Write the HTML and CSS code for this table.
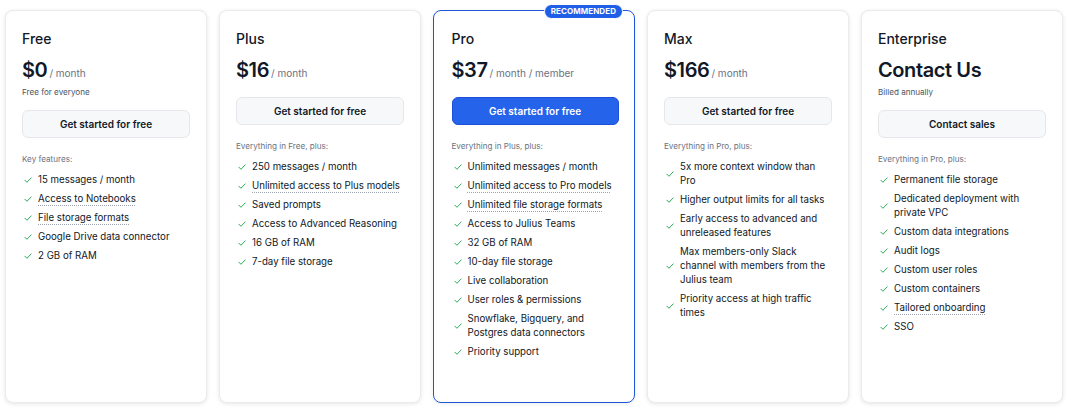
FILE: index.html
```html
<!DOCTYPE html>
<html lang="en">
<head>
<meta charset="utf-8">
<title>Pricing</title>
<link rel="stylesheet" href="styles.css">
</head>
<body>
<div class="plans">
  <div class="card">
    <div class="name">Free</div>
    <div class="price"><span class="amount">$0</span><span class="per">/ month</span></div>
    <div class="sub">Free for everyone</div>
    <div class="btn">Get started for free</div>
    <div class="feat-head">Key features:</div>
    <ul class="feats">
      <li><svg class="chk" viewBox="0 0 24 24"><path d="M4.5 12.5l5 5L19.5 7"/></svg><span>15 messages / month</span></li>
      <li><svg class="chk" viewBox="0 0 24 24"><path d="M4.5 12.5l5 5L19.5 7"/></svg><span class="dot">Access to Notebooks</span></li>
      <li><svg class="chk" viewBox="0 0 24 24"><path d="M4.5 12.5l5 5L19.5 7"/></svg><span class="dot">File storage formats</span></li>
      <li><svg class="chk" viewBox="0 0 24 24"><path d="M4.5 12.5l5 5L19.5 7"/></svg><span>Google Drive data connector</span></li>
      <li><svg class="chk" viewBox="0 0 24 24"><path d="M4.5 12.5l5 5L19.5 7"/></svg><span>2 GB of RAM</span></li>
    </ul>
  </div>
  <div class="card">
    <div class="name">Plus</div>
    <div class="price"><span class="amount">$16</span><span class="per">/ month</span></div>
    <div class="btn">Get started for free</div>
    <div class="feat-head">Everything in Free, plus:</div>
    <ul class="feats">
      <li><svg class="chk" viewBox="0 0 24 24"><path d="M4.5 12.5l5 5L19.5 7"/></svg><span>250 messages / month</span></li>
      <li><svg class="chk" viewBox="0 0 24 24"><path d="M4.5 12.5l5 5L19.5 7"/></svg><span class="dot">Unlimited access to Plus models</span></li>
      <li><svg class="chk" viewBox="0 0 24 24"><path d="M4.5 12.5l5 5L19.5 7"/></svg><span>Saved prompts</span></li>
      <li><svg class="chk" viewBox="0 0 24 24"><path d="M4.5 12.5l5 5L19.5 7"/></svg><span>Access to Advanced Reasoning</span></li>
      <li><svg class="chk" viewBox="0 0 24 24"><path d="M4.5 12.5l5 5L19.5 7"/></svg><span>16 GB of RAM</span></li>
      <li><svg class="chk" viewBox="0 0 24 24"><path d="M4.5 12.5l5 5L19.5 7"/></svg><span>7-day file storage</span></li>
    </ul>
  </div>
  <div class="card pro">
    <div class="badge">RECOMMENDED</div>
    <div class="name">Pro</div>
    <div class="price"><span class="amount">$37</span><span class="per">/ month / member</span></div>
    <div class="btn primary">Get started for free</div>
    <div class="feat-head">Everything in Plus, plus:</div>
    <ul class="feats">
      <li><svg class="chk" viewBox="0 0 24 24"><path d="M4.5 12.5l5 5L19.5 7"/></svg><span>Unlimited messages / month</span></li>
      <li><svg class="chk" viewBox="0 0 24 24"><path d="M4.5 12.5l5 5L19.5 7"/></svg><span class="dot">Unlimited access to Pro models</span></li>
      <li><svg class="chk" viewBox="0 0 24 24"><path d="M4.5 12.5l5 5L19.5 7"/></svg><span class="dot">Unlimited file storage formats</span></li>
      <li><svg class="chk" viewBox="0 0 24 24"><path d="M4.5 12.5l5 5L19.5 7"/></svg><span>Access to Julius Teams</span></li>
      <li><svg class="chk" viewBox="0 0 24 24"><path d="M4.5 12.5l5 5L19.5 7"/></svg><span>32 GB of RAM</span></li>
      <li><svg class="chk" viewBox="0 0 24 24"><path d="M4.5 12.5l5 5L19.5 7"/></svg><span>10-day file storage</span></li>
      <li><svg class="chk" viewBox="0 0 24 24"><path d="M4.5 12.5l5 5L19.5 7"/></svg><span>Live collaboration</span></li>
      <li><svg class="chk" viewBox="0 0 24 24"><path d="M4.5 12.5l5 5L19.5 7"/></svg><span>User roles &amp; permissions</span></li>
      <li><svg class="chk" viewBox="0 0 24 24"><path d="M4.5 12.5l5 5L19.5 7"/></svg><span>Snowflake, Bigquery, and Postgres data connectors</span></li>
      <li><svg class="chk" viewBox="0 0 24 24"><path d="M4.5 12.5l5 5L19.5 7"/></svg><span>Priority support</span></li>
    </ul>
  </div>
  <div class="card">
    <div class="name">Max</div>
    <div class="price"><span class="amount">$166</span><span class="per">/ month</span></div>
    <div class="btn">Get started for free</div>
    <div class="feat-head">Everything in Pro, plus:</div>
    <ul class="feats">
      <li><svg class="chk" viewBox="0 0 24 24"><path d="M4.5 12.5l5 5L19.5 7"/></svg><span>5x more context window than Pro</span></li>
      <li><svg class="chk" viewBox="0 0 24 24"><path d="M4.5 12.5l5 5L19.5 7"/></svg><span>Higher output limits for all tasks</span></li>
      <li><svg class="chk" viewBox="0 0 24 24"><path d="M4.5 12.5l5 5L19.5 7"/></svg><span>Early access to advanced and unreleased features</span></li>
      <li><svg class="chk" viewBox="0 0 24 24"><path d="M4.5 12.5l5 5L19.5 7"/></svg><span>Max members-only Slack channel with members from the Julius team</span></li>
      <li><svg class="chk" viewBox="0 0 24 24"><path d="M4.5 12.5l5 5L19.5 7"/></svg><span>Priority access at high traffic times</span></li>
    </ul>
  </div>
  <div class="card">
    <div class="name">Enterprise</div>
    <div class="price"><span class="amount">Contact Us</span></div>
    <div class="sub">Billed annually</div>
    <div class="btn">Contact sales</div>
    <div class="feat-head">Everything in Pro, plus:</div>
    <ul class="feats">
      <li><svg class="chk" viewBox="0 0 24 24"><path d="M4.5 12.5l5 5L19.5 7"/></svg><span>Permanent file storage</span></li>
      <li><svg class="chk" viewBox="0 0 24 24"><path d="M4.5 12.5l5 5L19.5 7"/></svg><span>Dedicated deployment with private VPC</span></li>
      <li><svg class="chk" viewBox="0 0 24 24"><path d="M4.5 12.5l5 5L19.5 7"/></svg><span>Custom data integrations</span></li>
      <li><svg class="chk" viewBox="0 0 24 24"><path d="M4.5 12.5l5 5L19.5 7"/></svg><span>Audit logs</span></li>
      <li><svg class="chk" viewBox="0 0 24 24"><path d="M4.5 12.5l5 5L19.5 7"/></svg><span>Custom user roles</span></li>
      <li><svg class="chk" viewBox="0 0 24 24"><path d="M4.5 12.5l5 5L19.5 7"/></svg><span>Custom containers</span></li>
      <li><svg class="chk" viewBox="0 0 24 24"><path d="M4.5 12.5l5 5L19.5 7"/></svg><span class="dot">Tailored onboarding</span></li>
      <li><svg class="chk" viewBox="0 0 24 24"><path d="M4.5 12.5l5 5L19.5 7"/></svg><span>SSO</span></li>
    </ul>
  </div>
</div>
</body>
</html>
```

FILE: styles.css
```css
* { box-sizing: border-box; }
html, body { margin: 0; padding: 0; background: #ffffff; }
body {
  font-family: Inter, "Noto Sans", "Liberation Sans", sans-serif;
  color: #111827;
  width: 1070px;
  height: 407px;
  overflow: hidden;
}
.plans {
  display: flex;
  gap: 12px;
  padding: 10px 7px 4px 5px;
  height: 407px;
}
.card {
  position: relative;
  flex: 0 0 202px;
  background: #fff;
  border: 1px solid #ebebeb;
  border-radius: 8px;
  box-shadow: 0 1px 4px rgba(0, 0, 0, 0.10);
  padding: 19px 16px 16px 16px;
  display: flex;
  flex-direction: column;
}
.card.pro {
  border: 1.5px solid #1d56d6;
  box-shadow: 0 1px 4px rgba(0, 0, 0, 0.08);
  padding: 18.5px 15.5px 16px 17.5px;
}
.badge {
  position: absolute;
  top: -7px;
  right: 11px;
  background: #1f5ee6;
  color: #fff;
  font-size: 8px;
  font-weight: 700;
  letter-spacing: 0.01em;
  line-height: 11px;
  padding: 1px 6px;
  border-radius: 8px;
  border: 1px solid #fff;
}
.name {
  font-size: 14px;
  font-weight: 500;
  line-height: 18px;
}
.price {
  margin-top: 10px;
  height: 24px;
  line-height: 24px;
  display: flex;
  align-items: baseline;
  white-space: nowrap;
}
.amount {
  font-size: 20px;
  font-weight: 600;
  letter-spacing: -0.02em;
}
.per {
  font-size: 10px;
  color: #6b7280;
  margin-left: 2px;
}
.sub {
  font-size: 8.1px;
  color: #4b5563;
  line-height: 13px;
  margin: 4px 0 -4px;
}
.btn {
  margin-top: 15px;
  height: 28px;
  border: 1px solid #e5e7eb;
  background: #f7f8fa;
  border-radius: 6px;
  display: flex;
  align-items: center;
  justify-content: center;
  font-size: 10px;
  font-weight: 600;
  color: #111827;
}
.btn.primary {
  background: #2563eb;
  border-color: #1d4ed8;
  color: #fff;
}
.feat-head {
  margin-top: 15px;
  font-size: 8.1px;
  line-height: 12px;
  color: #6b7280;
}
.feats {
  list-style: none;
  margin: 8px 0 0;
  padding: 0;
  display: flex;
  flex-direction: column;
  gap: 5px;
}
.feats li {
  display: flex;
  align-items: center;
  gap: 5px;
  font-size: 9.7px;
  line-height: 14px;
  color: #111827;
}
.chk {
  flex: 0 0 10px;
  width: 10px;
  height: 10px;
  margin-left: 1px;
  fill: none;
  stroke: #16a34a;
  stroke-width: 2.2;
  stroke-linecap: round;
  stroke-linejoin: round;
}
.dot {
  text-decoration: underline dotted #9ca3af;
  text-underline-offset: 2.5px;
}
```
